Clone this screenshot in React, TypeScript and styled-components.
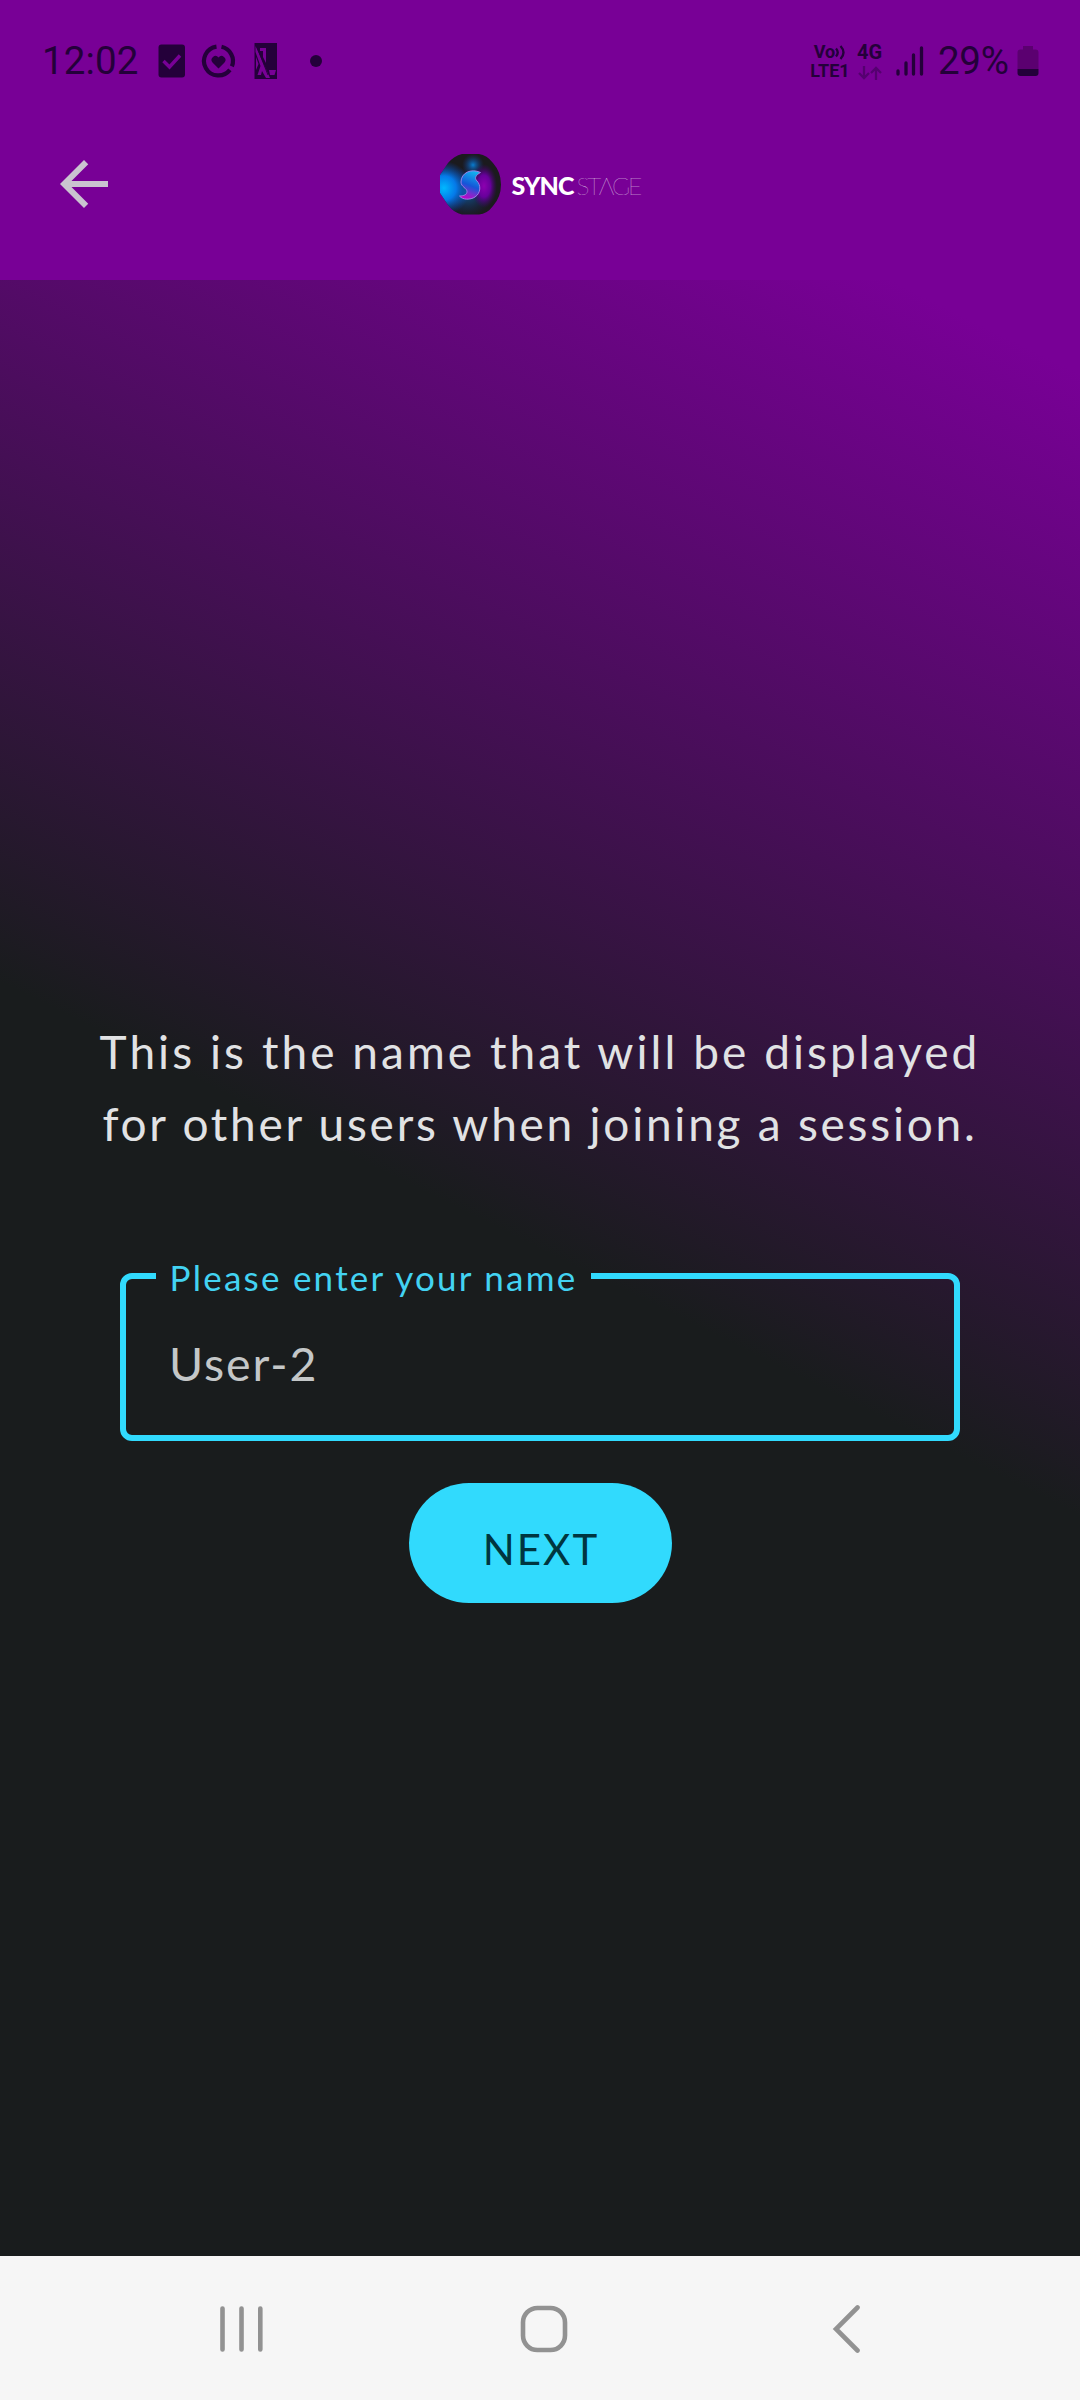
import React from "react";
import styled, { createGlobalStyle } from "styled-components";

const INK = "#24003a";
const PURPLE = "#780096";
const CYAN = "#31dafd";

const GlobalStyle = createGlobalStyle`
  *, *::before, *::after { box-sizing: border-box; }
  body { margin: 0; background: #191c1d; }
`;

const Screen = styled.div`
  width: 1080px;
  height: 2400px;
  display: flex;
  flex-direction: column;
  overflow: hidden;
  font-family: "Lato", "Liberation Sans", sans-serif;
`;

const TopArea = styled.header`
  height: 280px;
  flex: none;
  background: ${PURPLE};
`;

const StatusBar = styled.div`
  height: 122px;
  padding: 0 41px 0 42px;
  display: flex;
  align-items: center;
  justify-content: space-between;
  color: ${INK};
  font-family: "Roboto", sans-serif;
`;

const StatusGroup = styled.div`
  display: flex;
  align-items: center;
`;

const StatusText = styled.span<{ $spacing: number; $width: number; $left?: number }>`
  width: ${(p) => p.$width}px;
  margin-left: ${(p) => p.$left ?? 0}px;
  font-size: 38.5px;
  line-height: 44px;
  white-space: nowrap;
  letter-spacing: ${(p) => p.$spacing}px;
`;

const Glyph = styled.svg<{ $left?: number }>`
  display: block;
  flex: none;
  margin-left: ${(p) => p.$left ?? 0}px;
`;

const NetworkStack = styled.div<{ $left: number; $width: number }>`
  width: ${(p) => p.$width}px;
  margin-left: ${(p) => p.$left}px;
  height: 37px;
  display: flex;
  flex-direction: column;
  align-items: center;
  justify-content: space-between;
  font-weight: 700;
`;

const TinyText = styled.span<{ $size: number }>`
  font-size: ${(p) => p.$size}px;
  line-height: 18px;
  white-space: nowrap;
`;

const VoRow = styled.span`
  display: flex;
  align-items: center;
  height: 18px;
`;

const AppBar = styled.div`
  height: 124px;
  padding: 0 48px;
  display: grid;
  grid-template-columns: 72px 1fr 72px;
  align-items: center;
`;

const BackButton = styled.button`
  padding: 0;
  border: 0;
  background: none;
  width: 72px;
  height: 72px;
`;

const Brand = styled.div`
  display: flex;
  align-items: center;
  justify-content: center;
`;

const Wordmark = styled.div`
  display: flex;
  align-items: baseline;
  margin: 2px 0 0 10px;
  color: #fff;
  font-size: 25px;
  line-height: 30px;
`;

const WordBold = styled.span`
  width: 65px;
  font-weight: 900;
  letter-spacing: -0.9px;
`;

const WordThin = styled.span`
  width: 64px;
  font-size: 24.5px;
  font-weight: 100;
  letter-spacing: -2.3px;
  opacity: 0.9;
  white-space: nowrap;
`;

const Content = styled.main`
  flex: 1;
  display: flex;
  flex-direction: column;
  align-items: center;
  padding-top: 736px;
  background: linear-gradient(206.3deg, ${PURPLE} 84px, #191c1d 1108px);
`;

const Intro = styled.div`
  display: flex;
  flex-direction: column;
  align-items: center;
  color: #e1e2e4;
`;

const IntroLine = styled.p<{ $spacing: number }>`
  margin: 0;
  font-size: 46px;
  line-height: 72px;
  letter-spacing: ${(p) => p.$spacing}px;
  white-space: nowrap;
`;

const Field = styled.fieldset`
  width: 840px;
  height: 192px;
  margin: 89px 0 0;
  padding: 0 0 0 43px;
  border: 6px solid ${CYAN};
  border-radius: 12px;
  min-width: 0;
`;

const FieldLabel = styled.legend`
  width: 435px;
  height: 54px;
  margin-left: -13px;
  padding: 1px 0 0 13.5px;
  color: #43d3f2;
  font-size: 35px;
  line-height: 54px;
  letter-spacing: 2.25px;
  white-space: nowrap;
`;

const FieldInput = styled.input`
  display: block;
  width: 740px;
  height: 72px;
  margin-top: 24px;
  padding: 0;
  border: 0;
  outline: 0;
  background: transparent;
  color: #c4c7c8;
  font-family: inherit;
  font-size: 46.5px;
  letter-spacing: 1.9px;
`;

const NextButton = styled.button`
  width: 263px;
  height: 120px;
  margin-top: 42px;
  padding: 11px 0 0 2px;
  border: 0;
  border-radius: 60px;
  background: ${CYAN};
  color: #003640;
  font-family: inherit;
  font-size: 42px;
  line-height: 50px;
  letter-spacing: 2px;
`;

const NavBar = styled.nav`
  height: 144px;
  flex: none;
  padding: 2px 90px 0;
  display: grid;
  grid-template-columns: repeat(3, 302.5px);
  align-items: center;
  justify-items: center;
  background: #f6f6f6;
`;

function TaskIcon() {
  return (
    <Glyph $left={19} width="28" height="34" viewBox="0 0 28 34">
      <rect x="0.5" y="0.5" width="26.5" height="33" rx="3" fill={INK} />
      <path d="M5.5 17l6 6L22 11.5" fill="none" stroke={PURPLE} strokeWidth="3.4" />
    </Glyph>
  );
}

function HealthIcon() {
  return (
    <Glyph $left={14} width="37" height="36" viewBox="0 0 37 36">
      <g fill="none" stroke={INK} strokeWidth="4.2">
        <path d="M21.500 3.800A14.500 14.500 0 0 1 31.900 23.400" />
        <path d="M29.900 26.900A14.500 14.500 0 1 1 16.500 3.600" />
      </g>
      <path d="M18.500 25.500l-6-6a3.900 3.900 0 0 1 6-5 3.900 3.900 0 0 1 6 5z" fill={INK} />
    </Glyph>
  );
}

function PosterIcon() {
  return (
    <Glyph $left={17} width="24" height="36" viewBox="0 0 24 36">
      <path d="M0.5 0h22.5v36H0.5z" fill={INK} />
      <path d="M1.500 3L16 35h-4L8 28l-1 4H3.500l3-9L1.500 9zM6 5h6v15l-3-6V8H6z" fill={PURPLE} />
      <path d="M2 14v13l2.500-6zM15 27h7l-1.500 5H16z" fill={PURPLE} />
      <path d="M3 4l11 28" stroke={INK} strokeWidth="0.9" />
    </Glyph>
  );
}

function DataArrows() {
  return (
    <svg width="24" height="14" viewBox="0 0 24 14">
      <path
        d="M6 0v12M1 7l5 5 5-5M18 14V2M13 7l5-5 5 5"
        fill="none"
        stroke="#550070"
        strokeWidth="2.3"
      />
    </svg>
  );
}

function Voice() {
  return (
    <svg width="11" height="16" viewBox="0 0 11 16">
      <path d="M1 4.500q3.500 4 0 8M5.500 2q6 6.500 0 13" fill="none" stroke={INK} strokeWidth="2.3" />
    </svg>
  );
}

function SignalIcon() {
  return (
    <Glyph $left={13} width="30" height="30" viewBox="0 0 30 30">
      <path
        d="M3 25v3M11 17v11M18.500 9v19M26.500 2v26"
        stroke={INK}
        strokeWidth="3.3"
        strokeLinecap="round"
      />
    </Glyph>
  );
}

function BatteryIcon() {
  return (
    <Glyph $left={6} width="22" height="32" viewBox="0 0 22 32">
      <path d="M6 1h10v3.500h2.500q3 0 3 3V24H0.500V7.500q0-3 3-3H6z" fill="#5b0070" />
      <path d="M0.500 24h21v4q0 3-3 3h-15q-3 0-3-3z" fill={INK} />
    </Glyph>
  );
}

function BrandDisc() {
  return (
    <svg width="62" height="61" viewBox="0 0 62 61">
      <defs>
        <clipPath id="disc">
          <path d="M22 0h17q8 1 14 9 8 9 8 21.500T53 52q-6 8-14 8.500H22Q14 59 8 51L0 39V21L8 9Q14 2 22 0z" />
        </clipPath>
        <radialGradient id="cyanGlow">
          <stop offset="0" stopColor="#00b8ff" />
          <stop offset="0.45" stopColor="#0579e8" />
          <stop offset="1" stopColor="#0845b8" stopOpacity="0" />
        </radialGradient>
        <radialGradient id="blueGlow">
          <stop offset="0" stopColor="#087dd0" />
          <stop offset="1" stopColor="#163080" stopOpacity="0" />
        </radialGradient>
        <radialGradient id="violetGlow">
          <stop offset="0" stopColor="#8d00b0" />
          <stop offset="0.5" stopColor="#67009b" />
          <stop offset="1" stopColor="#40006d" stopOpacity="0" />
        </radialGradient>
        <linearGradient id="mark" x1="0.6" y1="0" x2="0.3" y2="1">
          <stop offset="0" stopColor="#12b2ef" />
          <stop offset="0.5" stopColor="#1456d8" />
          <stop offset="0.75" stopColor="#7430ce" />
          <stop offset="1" stopColor="#c500c8" />
        </linearGradient>
      </defs>
      <g clipPath="url(#disc)">
        <rect width="62" height="61" fill="#1b1a1e" />
        <ellipse cx="27" cy="38" rx="26" ry="25" fill="url(#blueGlow)" opacity="0.7" />
        <circle cx="4" cy="34" r="27" fill="url(#cyanGlow)" />
        <circle cx="33" cy="11" r="11" fill="url(#blueGlow)" />
        <ellipse cx="44" cy="32" rx="13" ry="22" fill="url(#violetGlow)" />
      </g>
      <path
        d="M40.500 18.500C31 14 21 19 21 28c0 5 6 6 6 9.500 0 3-3 4.500-7.500 4.500 3 4 11 4 15.500 1 6-4 6-12 2-16-3-3-1-6 3.500-8.500z"
        fill="url(#mark)"
        stroke="#9b80e8"
        strokeWidth="1"
      />
    </svg>
  );
}

export default function App() {
  return (
    <Screen>
      <GlobalStyle />
      <TopArea>
        <StatusBar>
          <StatusGroup>
            <StatusText $width={97} $spacing={0.1}>12:02</StatusText>
            <TaskIcon />
            <HealthIcon />
            <PosterIcon />
            <Glyph $left={32} width="12" height="12" viewBox="0 0 12 12">
              <circle cx="6" cy="6" r="6" fill={INK} />
            </Glyph>
          </StatusGroup>
          <StatusGroup>
            <NetworkStack $left={0} $width={38}>
              <VoRow>
                <TinyText $size={18}>Vo</TinyText>
                <Voice />
              </VoRow>
              <TinyText $size={18}>LTE1</TinyText>
            </NetworkStack>
            <NetworkStack $left={8} $width={25}>
              <TinyText $size={20}>4G</TinyText>
              <DataArrows />
            </NetworkStack>
            <SignalIcon />
            <StatusText $left={13} $width={73} $spacing={-0.3}>29%</StatusText>
            <BatteryIcon />
          </StatusGroup>
        </StatusBar>
        <AppBar>
          <BackButton aria-label="Back">
            <svg width="72" height="72" viewBox="0 0 24 24">
              <path
                d="M20 11H7.830l5.590-5.590L12 4l-8 8 8 8 1.410-1.410L7.830 13H20v-2z"
                fill="#cac4d0"
              />
            </svg>
          </BackButton>
          <Brand>
            <BrandDisc />
            <Wordmark>
              <WordBold>SYNC</WordBold>
              <WordThin>STΛGE</WordThin>
            </Wordmark>
          </Brand>
        </AppBar>
      </TopArea>
      <Content>
        <Intro>
          <IntroLine $spacing={3.05}>This is the name that will be displayed</IntroLine>
          <IntroLine $spacing={2.75}>for other users when joining a session.</IntroLine>
        </Intro>
        <Field>
          <FieldLabel>Please enter your name</FieldLabel>
          <FieldInput defaultValue="User-2" aria-label="Please enter your name" />
        </Field>
        <NextButton>NEXT</NextButton>
      </Content>
      <NavBar>
        <svg width="44" height="48" viewBox="0 0 44 48">
          <path d="M3.500 3.500v41M22.500 3.500v41M41.300 3.500v41" stroke="#929292" strokeWidth="4.6" strokeLinecap="round" />
        </svg>
        <svg width="48" height="48" viewBox="0 0 48 48">
          <rect x="3" y="3" width="42" height="42" rx="14.5" fill="none" stroke="#929292" strokeWidth="4.6" />
        </svg>
        <svg width="28" height="50" viewBox="0 0 28 50">
          <path d="M25.500 3.500L4 25l21.500 21.500" fill="none" stroke="#929292" strokeWidth="4.6" strokeLinecap="round" />
        </svg>
      </NavBar>
    </Screen>
  );
}
